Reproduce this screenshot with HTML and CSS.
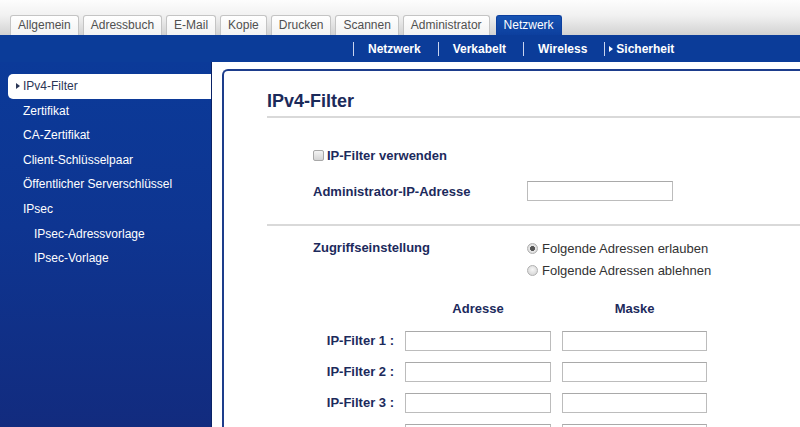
FILE: index.html
```html
<!DOCTYPE html>
<html lang="de">
<head>
<meta charset="utf-8">
<title>IPv4-Filter</title>
<link rel="stylesheet" href="styles.css">
</head>
<body>
<header class="top">
  <nav class="tabs">
    <a class="tab">Allgemein</a>
    <a class="tab">Adressbuch</a>
    <a class="tab">E-Mail</a>
    <a class="tab">Kopie</a>
    <a class="tab">Drucken</a>
    <a class="tab">Scannen</a>
    <a class="tab">Administrator</a>
    <a class="tab active">Netzwerk</a>
  </nav>
</header>
<nav class="subnav">
  <a class="sub">Netzwerk</a>
  <a class="sub">Verkabelt</a>
  <a class="sub">Wireless</a>
  <a class="sub current"><span class="tri"></span>Sicherheit</a>
</nav>
<div class="main">
  <aside class="sidebar">
    <a class="item selected"><span class="tri dark"></span>IPv4-Filter</a>
    <a class="item">Zertifikat</a>
    <a class="item">CA-Zertifikat</a>
    <a class="item">Client-Schlüsselpaar</a>
    <a class="item">Öffentlicher Serverschlüssel</a>
    <a class="item">IPsec</a>
    <a class="item indent">IPsec-Adressvorlage</a>
    <a class="item indent">IPsec-Vorlage</a>
  </aside>
  <section class="panel">
    <div class="frame">
      <h1 class="title">IPv4-Filter</h1>
      <div class="block first">
        <label class="row check"><input type="checkbox" class="chk"><span class="lbl">IP-Filter verwenden</span></label>
        <div class="row">
          <span class="lbl col1">Administrator-IP-Adresse</span>
          <input type="text" class="field admin">
        </div>
      </div>
      <div class="block second">
        <div class="access">
          <span class="lbl col1 acc">Zugriffseinstellung</span>
          <div class="radios">
            <label class="radio-row"><input type="radio" name="acc" class="rad" checked><span>Folgende Adressen erlauben</span></label>
            <label class="radio-row"><input type="radio" name="acc" class="rad"><span>Folgende Adressen ablehnen</span></label>
          </div>
        </div>
        <div class="filters">
          <span></span><span class="lbl head">Adresse</span><span class="lbl head">Maske</span>
          <span class="lbl fl">IP-Filter 1 :</span><input type="text" class="field"><input type="text" class="field">
          <span class="lbl fl">IP-Filter 2 :</span><input type="text" class="field"><input type="text" class="field">
          <span class="lbl fl">IP-Filter 3 :</span><input type="text" class="field"><input type="text" class="field">
          <span class="lbl fl">IP-Filter 4 :</span><input type="text" class="field"><input type="text" class="field">
          <span class="lbl fl">IP-Filter 5 :</span><input type="text" class="field"><input type="text" class="field">
        </div>
      </div>
    </div>
  </section>
</div>
</body>
</html>
```

FILE: styles.css
```css
* { box-sizing: border-box; }
html, body { margin: 0; padding: 0; }
body {
  font-family: "Liberation Sans", Arial, sans-serif;
  font-size: 12px;
  background: #ffffff;
  width: 800px;
  overflow: hidden;
}
a { text-decoration: none; }

.top {
  height: 35px;
  background: linear-gradient(#fdfdfd 0%, #f1f1f1 45%, #d2d2d2 100%);
  display: flex;
  align-items: flex-end;
  padding-left: 10px;
}
.tabs { display: flex; gap: 4px; }
.tab {
  height: 20px;
  line-height: 19px;
  padding: 0 7px;
  border: 1px solid #c4c4c4;
  border-bottom: none;
  border-radius: 3px 3px 0 0;
  background: linear-gradient(#ffffff, #f2f2f2);
  color: #505050;
  font-size: 12px;
}
.tab.active {
  background: linear-gradient(#1753b2, #0c3f9e);
  border-color: #0c3f9e;
  color: #ffffff;
  margin-left: 2px;
}

.subnav {
  height: 27px;
  background: #0b3c99;
  display: flex;
  align-items: center;
  padding-left: 353px;
  color: #fff;
}
.sub {
  color: #ffffff;
  font-weight: bold;
  font-size: 12px;
  line-height: 14px;
  border-left: 1px solid #c9d4ee;
  padding: 0 17px 0 14px;
  display: flex;
  align-items: center;
}
.sub.current { padding-left: 4px; }
.tri {
  display: inline-block;
  width: 0; height: 0;
  border-top: 3px solid transparent;
  border-bottom: 3px solid transparent;
  border-left: 4px solid #ffffff;
  margin-right: 3px;
}
.tri.dark { border-left-color: #2b3656; }

.main {
  display: flex;
  min-height: 365px;
}
.sidebar {
  width: 212px;
  flex: none;
  background: linear-gradient(#0b3a99 0%, #0e3591 40%, #13297a 100%);
  border-right: 1px solid #0a2266;
  padding-top: 12px;
  display: flex;
  flex-direction: column;
}
.item {
  height: 24.6px;
  line-height: 24.6px;
  color: #ffffff;
  font-size: 12px;
  padding-left: 23px;
  white-space: nowrap;
}
.item.indent { padding-left: 34px; }
.item.selected {
  background: #ffffff;
  color: #2b3656;
  margin-left: 8px;
  padding-left: 8px;
  border-radius: 5px 0 0 5px;
  display: flex;
  align-items: center;
}

.panel {
  flex: 1;
  background: #ffffff;
  border-top-left-radius: 8px;
  padding: 7px 0 0 10px;
  margin-top: 0;
}
.frame {
  border-top: 2px solid #1d3d8c;
  border-left: 2px solid #1d3d8c;
  border-top-left-radius: 6px;
  height: 100%;
}
.title {
  margin: 0 0 0 43px;
  padding: 19px 0 4px 0;
  font-size: 18px;
  line-height: 22px;
  font-weight: bold;
  color: #1b2a5a;
  border-bottom: 2px solid #d9d9d9;
}
.block { margin-left: 43px; padding-left: 46px; }
.block.first {
  padding-top: 27px;
  padding-bottom: 23px;
  border-bottom: 2px solid #d9d9d9;
  display: flex;
  flex-direction: column;
  gap: 16px;
}
.row { display: flex; align-items: center; height: 20px; }
.lbl {
  font-weight: bold;
  font-size: 13px;
  color: #1c2a5c;
  white-space: nowrap;
}
.col1 { width: 214px; flex: none; }
.chk {
  appearance: none;
  -webkit-appearance: none;
  width: 11px; height: 11px;
  margin: 0 3px 0 0;
  border: 1px solid #a8a8a8;
  border-radius: 2px;
  background: linear-gradient(#f4f4f4, #d4d4d4);
}
.field {
  height: 20px;
  border: 1px solid #bcbcbc;
  border-top-color: #a9a9a9;
  background: #fff;
  margin: 0;
  padding: 0 3px;
  font-family: inherit;
  font-size: 12px;
}
.field.admin { width: 146px; }

.block.second { padding-top: 11px; }
.access { display: flex; }
.acc { height: 22px; line-height: 22px; }
.radios { display: flex; flex-direction: column; }
.radio-row {
  display: flex;
  align-items: center;
  height: 22px;
  font-size: 13px;
  color: #333333;
}
.rad {
  appearance: none;
  -webkit-appearance: none;
  width: 11px; height: 11px;
  margin: 0 4px 0 0;
  border: 1px solid #b0b0b0;
  border-radius: 50%;
  background: radial-gradient(circle at 50% 40%, #f6f6f6, #cfcfcf);
}
.rad:checked {
  background: radial-gradient(circle, #555555 0 2.2px, #e8e8e8 2.8px, #cfcfcf 100%);
}

.filters {
  margin-top: 19px;
  display: grid;
  grid-template-columns: 81px 146px 145px;
  column-gap: 11px;
  row-gap: 11px;
  grid-auto-rows: 20px;
}
.filters .head {
  text-align: center;
  line-height: 18px;
  height: 18px;
  margin-bottom: -9px;
}
.fl { text-align: right; line-height: 20px; }
.filters .field { width: 100%; }
```
